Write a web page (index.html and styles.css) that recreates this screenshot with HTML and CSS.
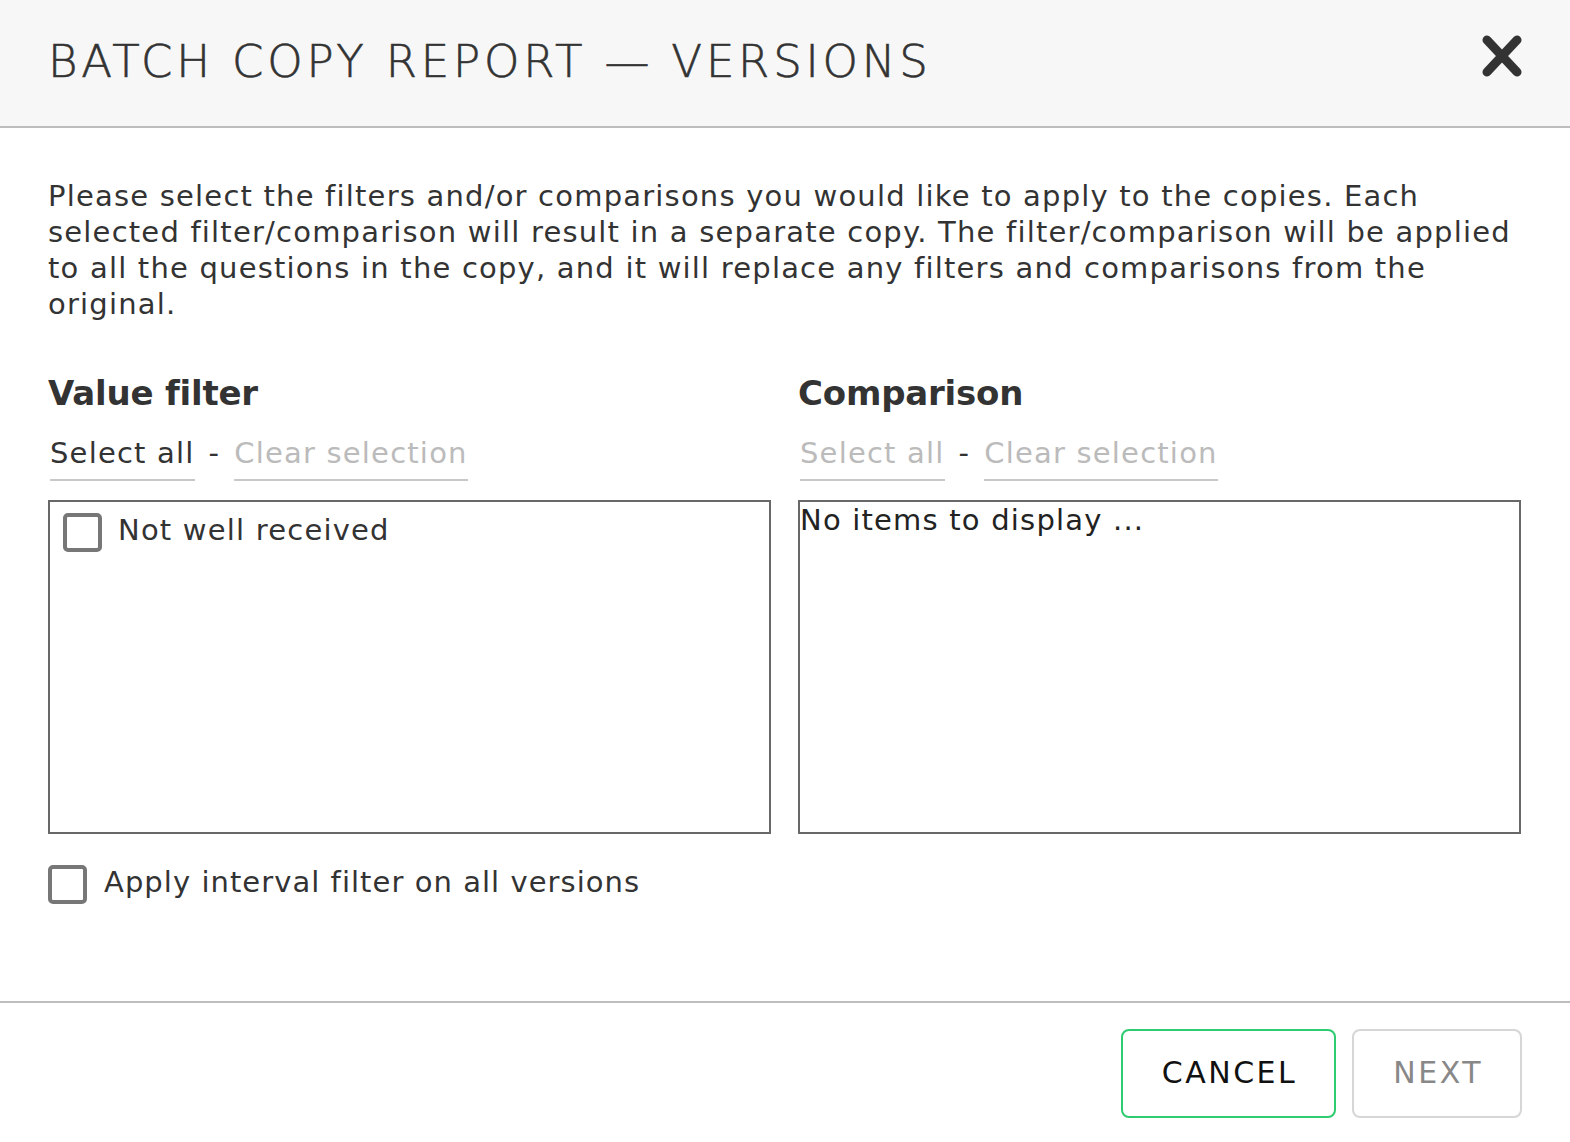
FILE: index.html
```html
<!DOCTYPE html>
<html lang="en">
<head>
<meta charset="utf-8">
<title>Batch copy report — Versions</title>
<link rel="stylesheet" href="styles.css">
</head>
<body>
<div class="dialog">
  <header class="dialog-header">
    <h1 class="dialog-title">BATCH COPY REPORT — VERSIONS</h1>
    <button class="close-btn" aria-label="Close">
      <svg viewBox="0 0 40 42" width="40" height="42" aria-hidden="true">
        <path d="M5 5 L35 37 M35 5 L5 37" stroke="#333" stroke-width="9" stroke-linecap="round" fill="none"/>
      </svg>
    </button>
  </header>

  <main class="dialog-body">
    <p class="intro">Please select the filters and/or comparisons you would like to apply to the copies. Each selected filter/comparison will result in a separate copy. The filter/comparison will be applied to all the questions in the copy, and it will replace any filters and comparisons from the original.</p>

    <div class="columns">
      <section class="column">
        <h2 class="column-title">Value filter</h2>
        <div class="links">
          <span class="link">Select all</span>
          <span class="sep">-</span>
          <span class="link disabled">Clear selection</span>
        </div>
        <div class="listbox">
          <label class="list-item">
            <span class="checkbox"></span>
            <span class="item-label">Not well received</span>
          </label>
        </div>
      </section>

      <section class="column">
        <h2 class="column-title">Comparison</h2>
        <div class="links">
          <span class="link disabled">Select all</span>
          <span class="sep">-</span>
          <span class="link disabled">Clear selection</span>
        </div>
        <div class="listbox">
          <div class="empty">No items to display ...</div>
        </div>
      </section>
    </div>

    <label class="option">
      <span class="checkbox"></span>
      <span class="option-label">Apply interval filter on all versions</span>
    </label>
  </main>

  <footer class="dialog-footer">
    <button class="btn btn-cancel">CANCEL</button>
    <button class="btn btn-next" disabled>NEXT</button>
  </footer>
</div>
</body>
</html>
```

FILE: styles.css
```css
* {
  box-sizing: border-box;
}

html, body {
  margin: 0;
  padding: 0;
  background: #ffffff;
}

body {
  font-family: "DejaVu Sans", "Liberation Sans", sans-serif;
  color: #333333;
}

.dialog {
  display: flex;
  flex-direction: column;
  min-height: 100vh;
  height: 1142px;
}

/* Header */
.dialog-header {
  display: flex;
  align-items: center;
  justify-content: space-between;
  background: #f7f7f7;
  border-bottom: 2px solid #bdbdbd;
  padding: 35px 48px 37px 48px;
  height: 128px;
}

.dialog-title {
  margin: 0;
  font-size: 45px;
  line-height: 54px;
  font-weight: 300;
  letter-spacing: 3.8px;
  -webkit-text-stroke: 0.6px #333333;
  color: #333333;
}

.close-btn {
  border: 0;
  background: transparent;
  padding: 0;
  margin: 0 0 12px 0;
  width: 40px;
  height: 42px;
  cursor: pointer;
}

.close-btn svg {
  display: block;
}

/* Body */
.dialog-body {
  padding: 0 49px 0 48px;
}

.intro {
  margin: 50px 0 0 0;
  font-size: 29px;
  line-height: 36px;
  letter-spacing: 1.2px;
  color: #333333;
}

.columns {
  display: grid;
  grid-template-columns: 1fr 1fr;
  column-gap: 27px;
  margin-top: 51px;
}

.column-title {
  margin: 0;
  font-size: 34px;
  line-height: 40px;
  font-weight: bold;
  letter-spacing: -0.2px;
  color: #333333;
}

.links {
  display: flex;
  align-items: flex-start;
  margin: 22px 0 0 2px;
  font-size: 29px;
  line-height: 36px;
  letter-spacing: 1.2px;
}

.link {
  color: #333333;
  padding-bottom: 8px;
  border-bottom: 2px solid #c8c8c8;
  cursor: pointer;
}

.link.disabled {
  color: #bbbbbb;
}

.sep {
  margin: 0 14px;
  color: #333333;
}

.listbox {
  margin-top: 19px;
  height: 334px;
  border: 2px solid #686868;
  background: #ffffff;
}

.list-item {
  display: flex;
  align-items: flex-start;
  padding: 11px 13px 0 13px;
}

.checkbox {
  flex: none;
  width: 39px;
  height: 39px;
  border: 4px solid #777777;
  border-radius: 5px;
  background: #ffffff;
}

.item-label {
  margin: -1px 0 0 16px;
  font-size: 29px;
  line-height: 36px;
  letter-spacing: 1.2px;
  color: #333333;
}

.empty {
  font-size: 29px;
  line-height: 36px;
  letter-spacing: 1.2px;
  color: #222222;
}

.option {
  display: flex;
  align-items: flex-start;
  margin-top: 31px;
}

.option-label {
  margin: -1px 0 0 17px;
  font-size: 29px;
  line-height: 36px;
  letter-spacing: 1.05px;
  color: #333333;
}

/* Footer */
.dialog-footer {
  margin-top: auto;
  display: flex;
  justify-content: flex-end;
  gap: 16px;
  border-top: 2px solid #bdbdbd;
  padding: 26px 48px 24px 48px;
}

.btn {
  font-family: "DejaVu Sans", "Liberation Sans", sans-serif;
  font-size: 30px;
  line-height: 36px;
  letter-spacing: 2.5px;
  padding: 24px 37px 25px 39px;
  border-radius: 8px;
  background: #ffffff;
  cursor: pointer;
}

.btn-cancel {
  border: 2px solid #2ecc71;
  color: #111111;
}

.btn-next {
  border: 2px solid #d6d6d6;
  color: #888888;
}
```
